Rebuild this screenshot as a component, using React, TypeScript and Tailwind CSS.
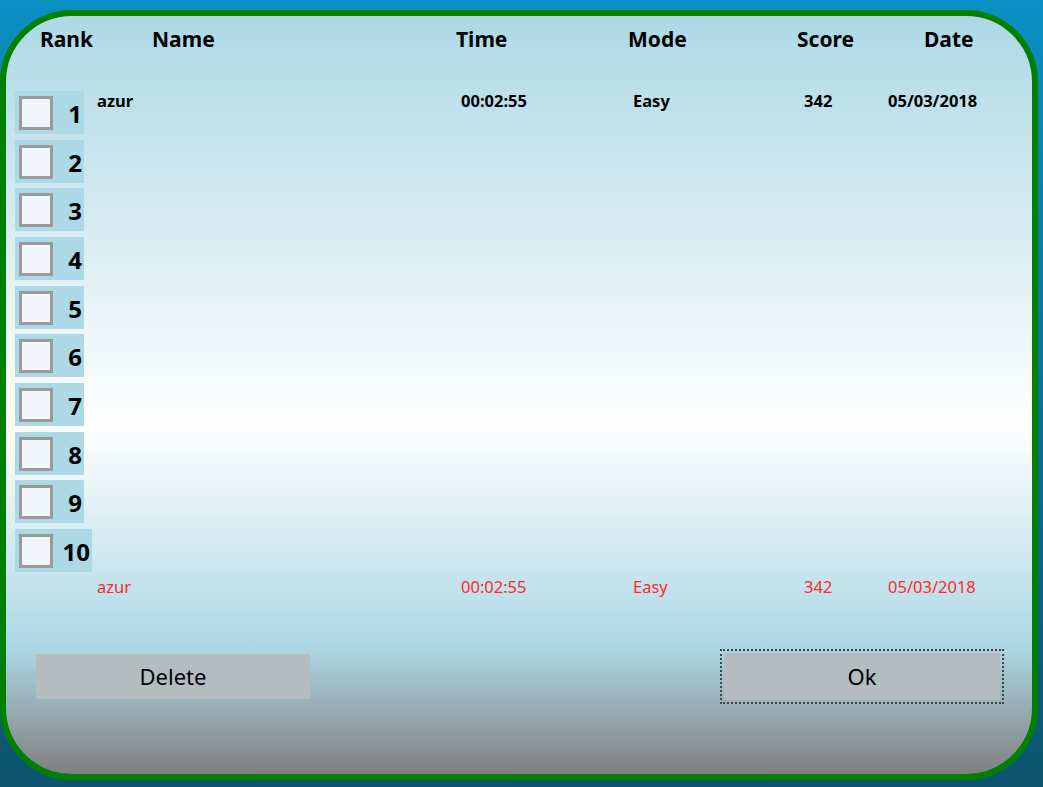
const rows = Array.from({ length: 10 }, (_, i) => i + 1);

const font = { fontFamily: '"Noto Sans", "Open Sans", sans-serif' };

function RankBox({ n }: { n: number }) {
  return (
    <div
      className={`flex h-[43px] shrink-0 justify-between bg-[#add8e6] pl-[4px] pr-[2px] ${
        n === 10 ? "w-[77px]" : "w-[69px]"
      }`}
    >
      <div className="mt-[5px] h-[34px] w-[34px] border-[3px] border-[#9a9a9a] bg-[#f0f6f9]" />
      <span className="pt-[11px] text-[24px] font-bold leading-[24px] text-black">{n}</span>
    </div>
  );
}

function DataCells({ red }: { red?: boolean }) {
  const tone = red ? "font-normal text-[#ff2a2a]" : "font-bold text-black";
  return (
    <div className={`grid grid-cols-[364px_172px_171px_84px_1fr] text-[16.5px] leading-[20px] ${tone}`}>
      <span>azur</span>
      <span>00:02:55</span>
      <span>Easy</span>
      <span>342</span>
      <span>05/03/2018</span>
    </div>
  );
}

export default function App() {
  return (
    <div
      className="h-[787px] w-[1043px] overflow-hidden bg-gradient-to-b from-[#0a90c3] to-[#0d5470] pt-[10px]"
      style={font}
    >
      <div className="flex h-[770px] w-[1038px] flex-col rounded-[72px] border-[6px] border-[#008000] bg-[linear-gradient(to_bottom,#add8e6_0%,#ffffff_54%,#add8e6_83%,#808080_100%)]">
        <div className="grid grid-cols-[112px_304px_172px_169px_127px_1fr] pl-[34px] pt-[9px] text-[21px] font-bold leading-[28px] text-black">
          <span>Rank</span>
          <span>Name</span>
          <span>Time</span>
          <span>Mode</span>
          <span>Score</span>
          <span>Date</span>
        </div>

        <div className="mt-[38px] flex flex-col gap-[5.67px] pl-[9px]">
          {rows.map((n) => (
            <div key={n} className="flex">
              <RankBox n={n} />
              <div className="pl-[13px]">{n === 1 && <DataCells />}</div>
            </div>
          ))}
        </div>

        <div className="mt-[5px] pl-[91px]">
          <DataCells red />
        </div>

        <div className="mt-[52px] flex items-center justify-between pl-[30px] pr-[28px]">
          <button className="h-[45px] w-[274px] bg-[#b4bcc0] text-[22px] text-black">Delete</button>
          <div className="flex h-[55px] w-[284px] border-2 border-dotted border-[#444] p-[2px]">
            <button className="flex-1 bg-[#b4bcc0] text-[22px] text-black">Ok</button>
          </div>
        </div>
      </div>
    </div>
  );
}
